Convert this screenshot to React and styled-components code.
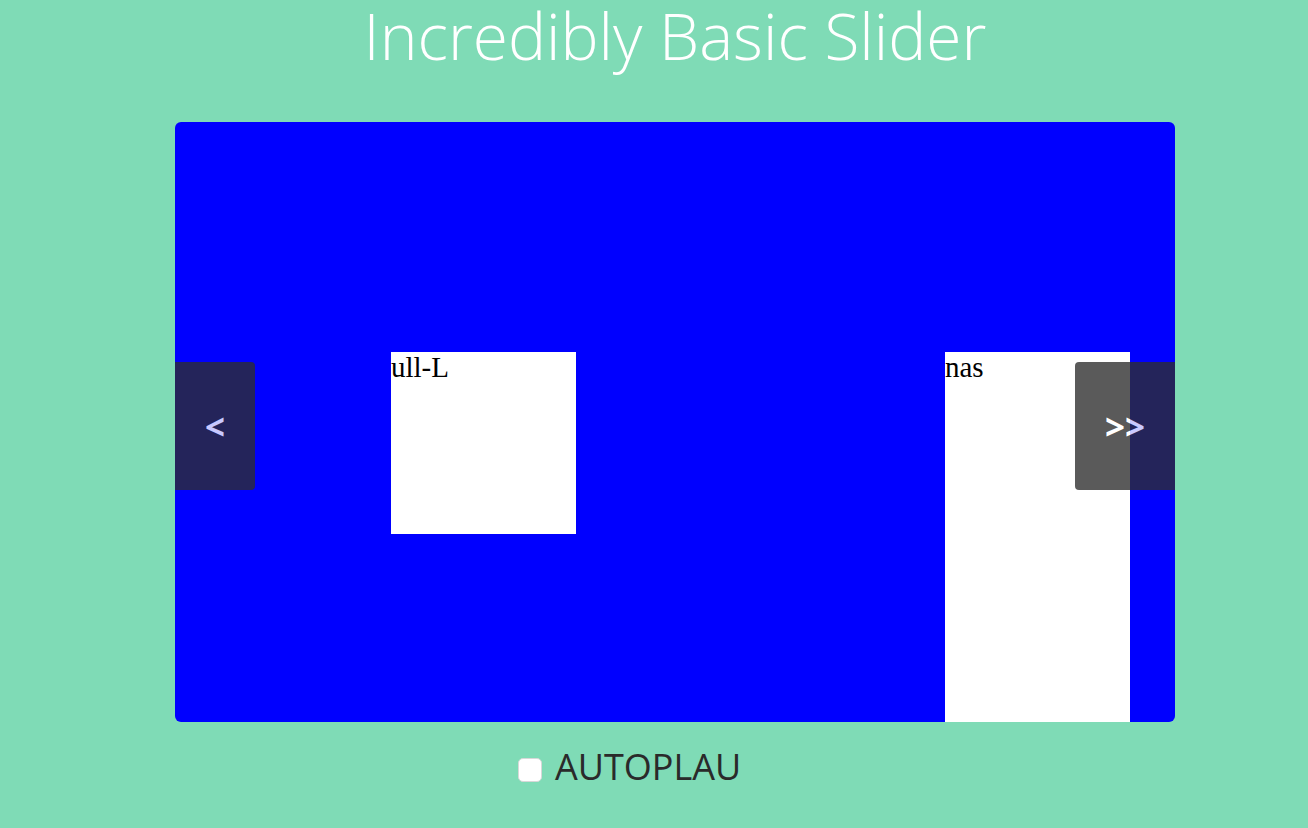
import styled, { createGlobalStyle } from "styled-components";

const GlobalStyle = createGlobalStyle`
  html, body {
    margin: 0;
    padding: 0;
    background: #7fdbb6;
  }
  body {
    font-family: "Open Sans", "Liberation Sans", sans-serif;
  }
`;

const Page = styled.main`
  width: 1308px;
  height: 828px;
  box-sizing: border-box;
  padding-left: 42px;
  display: flex;
  flex-direction: column;
  align-items: center;
  overflow: hidden;
`;

const Title = styled.h1`
  margin: 0;
  padding-top: 1px;
  font-size: 64px;
  line-height: 1.1;
  font-weight: 300;
  color: #fff;
`;

const Slider = styled.section`
  position: relative;
  margin-top: 51px;
  width: 1000px;
  height: 600px;
  background: #0000ff;
  border-radius: 6px;
  overflow: hidden;
`;

const Track = styled.div`
  display: flex;
  align-items: flex-start;
  height: 100%;
  padding-top: 230px;
  padding-left: 216px;
  gap: 369px;
  box-sizing: border-box;
`;

const Slide = styled.div`
  flex: none;
  width: 185px;
  height: ${(p) => (p.$tall ? "400px" : "182px")};
  background: #fff;
  font-family: "Liberation Serif", "Times New Roman", serif;
  font-size: 29px;
  line-height: 30px;
  color: #000;
`;

const Arrow = styled.button`
  position: absolute;
  top: 240px;
  ${(p) => (p.$side === "left" ? "left: 0;" : "right: 0;")}
  height: 128px;
  padding: 0 30px;
  border: none;
  border-radius: ${(p) => (p.$side === "left" ? "0 4px 4px 0" : "4px 0 0 4px")};
  background: #2e2e2e;
  opacity: 0.79;
  color: #fff;
  font-family: "Open Sans", "Liberation Sans", sans-serif;
  font-size: 35px;
  font-weight: 700;
  cursor: pointer;
`;

const Controls = styled.label`
  align-self: flex-start;
  margin-left: 476px;
  margin-top: 23px;
  display: flex;
  align-items: center;
  gap: 13px;
  font-size: 36px;
  line-height: 44px;
  color: #2a2a2a;
`;

const Check = styled.input`
  appearance: none;
  margin: 6px 0 0;
  width: 24px;
  height: 24px;
  border: 1px solid #d8d8d8;
  border-radius: 5px;
  background: #fff;
`;

export default function App() {
  return (
    <>
      <GlobalStyle />
      <Page>
        <Title>Incredibly Basic Slider</Title>
        <Slider>
          <Track>
            <Slide>ull-L</Slide>
            <Slide $tall>nas</Slide>
          </Track>
          <Arrow $side="left">&lt;</Arrow>
          <Arrow $side="right">&gt;&gt;</Arrow>
        </Slider>
        <Controls>
          <Check type="checkbox" />
          AUTOPLAU
        </Controls>
      </Page>
    </>
  );
}
